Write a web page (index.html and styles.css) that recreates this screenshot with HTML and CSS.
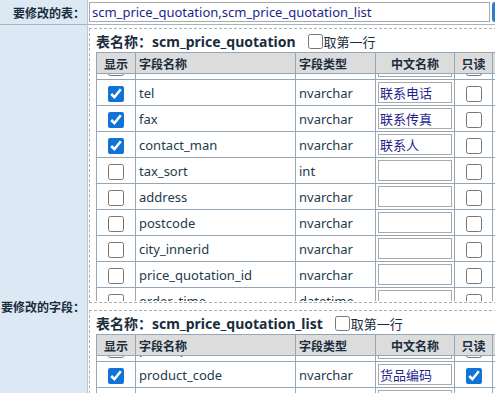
FILE: index.html
```html
<!DOCTYPE html>
<html lang="zh-CN">
<head>
    <meta charset="UTF-8">
    <meta name="viewport" content="width=device-width, initial-scale=1.0">
    <title>修改字段</title>
    <link rel="stylesheet" href="styles.css">
</head>
<body>

    <div class="edit-form">
        <div class="form-label row-table">要修改的表：</div>
        <div class="form-field row-table">
            <input type="text" class="table-input" value="scm_price_quotation,scm_price_quotation_list">
            <button type="button" class="pick-button">选择</button>
        </div>

        <div class="form-label">要修改的字段：</div>
        <div class="form-field field-list">

            <!-- first table -->
            <div class="table-box">
                <div class="table-title">
                    <span>表名称：scm_price_quotation</span>
                    <label class="first-row"><input type="checkbox">取第一行</label>
                </div>
                <table class="field-grid grid-head">
                    <colgroup>
                        <col class="col-show"><col class="col-name"><col class="col-type"><col class="col-cn"><col class="col-ro"><col class="col-extra">
                    </colgroup>
                    <tr>
                        <th class="c-center">显示</th>
                        <th>字段名称</th>
                        <th>字段类型</th>
                        <th class="c-center">中文名称</th>
                        <th class="c-center">只读</th>
                        <th></th>
                    </tr>
                </table>
                <div class="grid-view">
                    <table class="field-grid grid-body">
                        <colgroup>
                            <col class="col-show"><col class="col-name"><col class="col-type"><col class="col-cn"><col class="col-ro"><col class="col-extra">
                        </colgroup>
                        <tr>
                            <td class="c-center"><input type="checkbox"></td>
                            <td>user_id</td>
                            <td>nvarchar</td>
                            <td><input type="text" class="cn-input" value=""></td>
                            <td class="c-center"><input type="checkbox"></td>
                            <td></td>
                        </tr>
                        <tr>
                            <td class="c-center"><input type="checkbox" checked></td>
                            <td>tel</td>
                            <td>nvarchar</td>
                            <td><input type="text" class="cn-input" value="联系电话"></td>
                            <td class="c-center"><input type="checkbox"></td>
                            <td></td>
                        </tr>
                        <tr>
                            <td class="c-center"><input type="checkbox" checked></td>
                            <td>fax</td>
                            <td>nvarchar</td>
                            <td><input type="text" class="cn-input" value="联系传真"></td>
                            <td class="c-center"><input type="checkbox"></td>
                            <td></td>
                        </tr>
                        <tr>
                            <td class="c-center"><input type="checkbox" checked></td>
                            <td>contact_man</td>
                            <td>nvarchar</td>
                            <td><input type="text" class="cn-input" value="联系人"></td>
                            <td class="c-center"><input type="checkbox"></td>
                            <td></td>
                        </tr>
                        <tr>
                            <td class="c-center"><input type="checkbox"></td>
                            <td>tax_sort</td>
                            <td>int</td>
                            <td><input type="text" class="cn-input" value=""></td>
                            <td class="c-center"><input type="checkbox"></td>
                            <td></td>
                        </tr>
                        <tr>
                            <td class="c-center"><input type="checkbox"></td>
                            <td>address</td>
                            <td>nvarchar</td>
                            <td><input type="text" class="cn-input" value=""></td>
                            <td class="c-center"><input type="checkbox"></td>
                            <td></td>
                        </tr>
                        <tr>
                            <td class="c-center"><input type="checkbox"></td>
                            <td>postcode</td>
                            <td>nvarchar</td>
                            <td><input type="text" class="cn-input" value=""></td>
                            <td class="c-center"><input type="checkbox"></td>
                            <td></td>
                        </tr>
                        <tr>
                            <td class="c-center"><input type="checkbox"></td>
                            <td>city_innerid</td>
                            <td>nvarchar</td>
                            <td><input type="text" class="cn-input" value=""></td>
                            <td class="c-center"><input type="checkbox"></td>
                            <td></td>
                        </tr>
                        <tr>
                            <td class="c-center"><input type="checkbox"></td>
                            <td>price_quotation_id</td>
                            <td>nvarchar</td>
                            <td><input type="text" class="cn-input" value=""></td>
                            <td class="c-center"><input type="checkbox"></td>
                            <td></td>
                        </tr>
                        <tr>
                            <td class="c-center"><input type="checkbox"></td>
                            <td>order_time</td>
                            <td>datetime</td>
                            <td><input type="text" class="cn-input" value=""></td>
                            <td class="c-center"><input type="checkbox"></td>
                            <td></td>
                        </tr>
                    </table>
                </div>
            </div>

            <!-- second table -->
            <div class="table-box">
                <div class="table-title">
                    <span>表名称：scm_price_quotation_list</span>
                    <label class="first-row"><input type="checkbox">取第一行</label>
                </div>
                <table class="field-grid grid-head">
                    <colgroup>
                        <col class="col-show"><col class="col-name"><col class="col-type"><col class="col-cn"><col class="col-ro"><col class="col-extra">
                    </colgroup>
                    <tr>
                        <th class="c-center">显示</th>
                        <th>字段名称</th>
                        <th>字段类型</th>
                        <th class="c-center">中文名称</th>
                        <th class="c-center">只读</th>
                        <th></th>
                    </tr>
                </table>
                <div class="grid-view">
                    <table class="field-grid grid-body">
                        <colgroup>
                            <col class="col-show"><col class="col-name"><col class="col-type"><col class="col-cn"><col class="col-ro"><col class="col-extra">
                        </colgroup>
                        <tr>
                            <td class="c-center"><input type="checkbox"></td>
                            <td>price_quotation_id</td>
                            <td>nvarchar</td>
                            <td><input type="text" class="cn-input" value=""></td>
                            <td class="c-center"><input type="checkbox"></td>
                            <td></td>
                        </tr>
                        <tr>
                            <td class="c-center"><input type="checkbox" checked></td>
                            <td>product_code</td>
                            <td>nvarchar</td>
                            <td><input type="text" class="cn-input" value="货品编码"></td>
                            <td class="c-center"><input type="checkbox" checked></td>
                            <td></td>
                        </tr>
                        <tr>
                            <td class="c-center"><input type="checkbox"></td>
                            <td>product_name</td>
                            <td>nvarchar</td>
                            <td><input type="text" class="cn-input" value=""></td>
                            <td class="c-center"><input type="checkbox"></td>
                            <td></td>
                        </tr>
                        <tr>
                            <td class="c-center"><input type="checkbox"></td>
                            <td>price</td>
                            <td>decimal</td>
                            <td><input type="text" class="cn-input" value=""></td>
                            <td class="c-center"><input type="checkbox"></td>
                            <td></td>
                        </tr>
                    </table>
                </div>
            </div>

        </div>
    </div>

</body>
</html>
```

FILE: styles.css
```css
:root {
    --label-bg: #dce8f4;
    --label-text: #1a2d3c;
    --cell-text: #1d3b4c;
    --grid-line: #93a7b8;
    --head-bg: #dcdcdc;
    --input-border: #a9a9a9;
    --input-text: #1f1f8f;
    --check-color: #1173d4;
}

html,
body {
    margin: 0;
    overflow: hidden;
}

body {
    font-family: "Noto Sans", "Noto Sans CJK SC", sans-serif;
    font-size: 13px;
    color: var(--cell-text);
    background: #fff;
}

input[type="checkbox"] {
    accent-color: var(--check-color);
}

/* Outer form: label column + field column */
.edit-form {
    display: grid;
    grid-template-columns: 88px 600px;
}

.form-label {
    box-sizing: border-box;
    background: var(--label-bg);
    border-right: 1px solid #b9c9d6;
    display: flex;
    align-items: center;
    justify-content: flex-end;
    padding-right: 2px;
    font-family: "Noto Sans CJK SC", sans-serif;
    font-size: 12px;
    font-weight: bold;
    color: var(--label-text);
    white-space: nowrap;
}

.row-table {
    height: 25px;
    box-sizing: border-box;
    border-bottom: 1px solid #a2b5c5;
}

.form-field.row-table {
    display: flex;
    align-items: flex-start;
    padding: 2px 0 0 1px;
}

.table-input {
    width: 401px;
    height: 20px;
    box-sizing: border-box;
    margin: 0;
    padding: 0 2px;
    border: 1px solid var(--input-border);
    font-family: "Noto Sans", "Noto Sans CJK SC", sans-serif;
    font-size: 13px;
    color: var(--input-text);
}

.pick-button {
    height: 20px;
    margin-left: 2px;
    padding: 0 10px;
    border: none;
    border-radius: 3px;
    background: #2a7fc9;
    color: #fff;
    font-size: 12px;
}

.field-list {
    padding: 3px 1px;
}

/* Dashed box for each table */
.table-box {
    border: 1px dashed #b0b0b0;
    padding: 1px 6px 1px;
}

.table-box + .table-box {
    margin-top: 7px;
}

.table-title {
    height: 22px;
    display: flex;
    align-items: center;
    font-family: "Noto Sans", "Noto Sans CJK SC", sans-serif;
    font-size: 14px;
    font-weight: bold;
    color: var(--label-text);
}

.first-row {
    display: flex;
    align-items: center;
    margin-left: 12px;
    font-size: 13px;
    font-weight: normal;
    font-family: "Noto Sans CJK SC", sans-serif;
}

.first-row input {
    width: 15px;
    height: 15px;
    margin: 0 1px 0 0;
}

/* Field grid */
.field-grid {
    border-collapse: collapse;
    table-layout: fixed;
    width: 456px;
}

.col-show { width: 39px; }
.col-name { width: 160px; }
.col-type { width: 80px; }
.col-cn { width: 79px; }
.col-ro { width: 38px; }
.col-extra { width: 60px; }

.field-grid th,
.field-grid td {
    border: 1px solid var(--grid-line);
    padding: 0 3px;
    white-space: nowrap;
    overflow: hidden;
}

.grid-head th {
    height: 20px;
    background: var(--head-bg);
    font-family: "Noto Sans CJK SC", sans-serif;
    font-size: 12px;
    font-weight: bold;
    text-align: left;
    color: var(--label-text);
}

.grid-view {
    height: 227px;
    overflow: hidden;
}

.grid-body {
    margin-top: -20px;
}

.grid-body tr:first-child td {
    border-top: none;
}

.grid-body td {
    height: 25px;
}

.field-grid .c-center {
    text-align: center;
}

.field-grid input[type="checkbox"] {
    width: 16px;
    height: 16px;
    margin: 0;
    vertical-align: middle;
}

.cn-input {
    width: 74px;
    height: 21px;
    box-sizing: border-box;
    margin: 0 0 0 -1px;
    padding: 0 1px;
    border: 1px solid var(--input-border);
    font-family: "Noto Sans CJK SC", sans-serif;
    font-size: 13px;
    color: var(--input-text);
    vertical-align: middle;
}
```
